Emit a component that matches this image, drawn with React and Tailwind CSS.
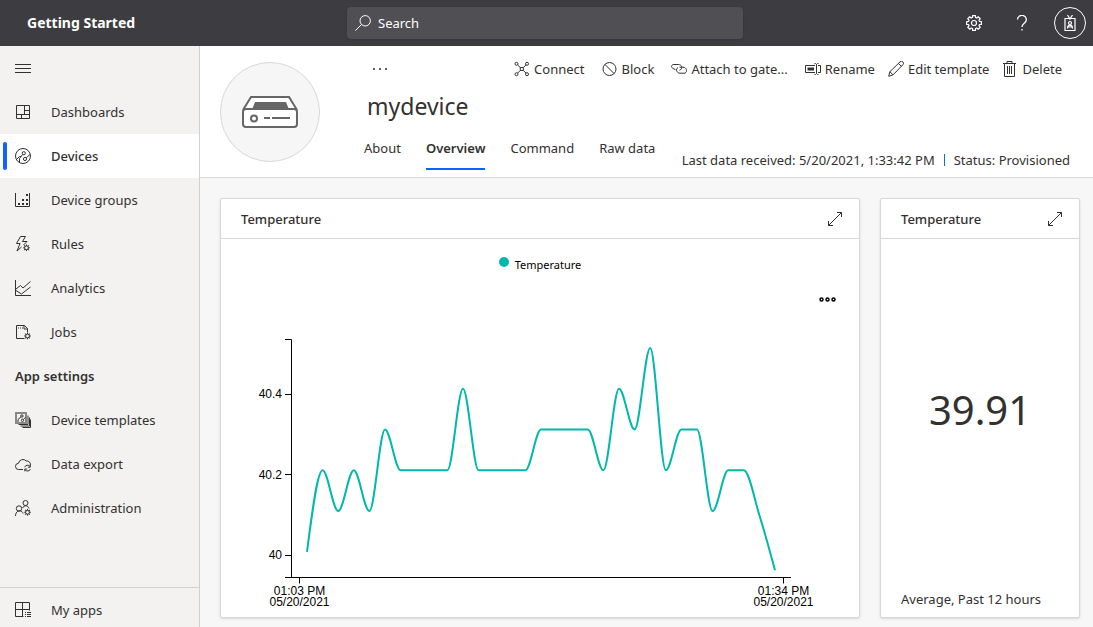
import React from "react";

function Icon({ size = 16, children, className = "", strokeWidth = 1 }) {
  return (
    <svg
      width={size}
      height={size}
      viewBox="0 0 16 16"
      fill="none"
      stroke="currentColor"
      strokeWidth={strokeWidth}
      className={"shrink-0 " + className}
      aria-hidden="true"
    >
      {children}
    </svg>
  );
}

/* Small gear used in the lower right corner of several icons */
function MiniGear({ cx, cy }) {
  const spokes = [0, 45, 90, 135, 180, 225, 270, 315];
  return (
    <g transform={`translate(${cx} ${cy})`}>
      <circle r="1.9" />
      {spokes.map((a) => (
        <path key={a} d="M0 -1.9V-3.3" transform={`rotate(${a})`} />
      ))}
    </g>
  );
}

const icons = {
  menu: <path d="M0 4.5h16M0 8.5h16M0 12.5h16" />,
  dashboards: (
    <path d="M1.5 1.5h13v13h-13zM1.5 10.5h13M9.5 1.5v9M9.5 6.5h5M6.5 10.5v4" />
  ),
  devices: (
    <>
      <circle cx="8" cy="8" r="7.5" />
      <circle cx="8.8" cy="5.2" r="1.6" />
      <circle cx="10" cy="11" r="1.6" />
      <path d="M4.500 14.500V10.500L7.700 6.400M1.500 11.500L4.500 8.500h1.500M11.200 9.900L15 6.500" />
    </>
  ),
  groups: (
    <>
      <path d="M.5 1v13.5h14V1" />
      <path
        d="M3 11h2v2H3zM7 11h2v2H7zM11 11h2v2h-2zM7 7h2v2H7zM11 7h2v2h-2zM11 2h2v2h-2z"
        fill="currentColor"
        stroke="none"
      />
    </>
  ),
  rules: (
    <>
      <path d="M5.500 .5h5L7.500 5.500h4.500L8.500 9M5.500 .5L1.500 7.500h3.500L2 15M2 15l4.500-4" />
      <MiniGear cx={11.5} cy={11.8} />
    </>
  ),
  analytics: (
    <path d="M.5 0v15.500H16M1 9l4.500-3.500L8 8l7.500-6.500M1 10.500l5.500 3.500L15.500 7" />
  ),
  jobs: (
    <>
      <path d="M9.500 14.500h-8v-13h8l3 3V8.500M9 1.500V5h3.500" />
      <path d="M3 4h1M5 4h1M7 4h1" />
      <MiniGear cx={12.5} cy={12} />
    </>
  ),
  templates: (
    <>
      <path d="M1 1h10v10H1z" strokeWidth="2" stroke="#8a8886" />
      <circle cx="6.900" cy="4" r="1.200" />
      <circle cx="7.500" cy="8.300" r="1.200" />
      <path d="M3 10V7.500L6 4.800M8.500 7.300l2-2" />
      <path d="M3.500 12.500h9.500V3.500M5.500 14h9V5.500M7.500 15.500H15.500V7.500" />
    </>
  ),
  exportData: (
    <>
      <path d="M8 13.500H3.700A3 3 0 0 1 3.500 7.300A4.500 4.500 0 0 1 11.300 5A3.500 3.500 0 0 1 15.400 9" />
      <path d="M9.700 11.200a3 3 0 0 1 5.300-.700M15.300 8.800v2.400h-2.400M15.400 13a3 3 0 0 1-5.300.700M9.800 15.300v-2.300H12.200" />
    </>
  ),
  admin: (
    <>
      <circle cx="10.500" cy="3" r="2.500" />
      <circle cx="4" cy="8.500" r="2.700" />
      <path d="M.5 16c0-6.500 7-6.500 7.500-2.500M7.500 8c1.500-3 5.500-3 6.500.500" />
      <MiniGear cx={12.5} cy={12.3} />
    </>
  ),
  apps: (
    <path d="M8.500 14.500h-8v-14h14v8M.5 7.500h14M7.500 .5v14M10 10.500h1M12 10.500h4M10 12.500h1M12 12.500h4M10 14.500h1M12 14.500h4" />
  ),
  connect: (
    <>
      <circle cx="2.500" cy="2.800" r="1.500" />
      <circle cx="13" cy="2.800" r="1.500" />
      <circle cx="2.500" cy="13.200" r="1.500" />
      <circle cx="13" cy="13.200" r="1.500" />
      <path d="M3.700 4L6.300 6.600M11.900 4L9.300 6.600M3.700 12l2.600-2.600M11.900 12L9.300 9.400M6.300 6.500h3v3h-3z" />
    </>
  ),
  block: (
    <>
      <circle cx="7.500" cy="8" r="6.500" />
      <path d="M2.900 3.400l9.200 9.200" />
    </>
  ),
  attach: (
    <>
      <path d="M4.500 8.800L2 7.500C-.500 6 .500 3.500 3 3.500h4.500c3 0 4.500 3.500 2 5.300L8.500 9.200" />
      <path d="M8.500 6.200h3.500c3.500 0 4.800 4.300 2 6H9C5.500 12.200 4.300 7.800 7 6.500" />
    </>
  ),
  rename: (
    <>
      <path d="M10 11.500H.5v-7H10M13 4.500h2.500v7H13" />
      <path d="M2.500 8h6.500" strokeWidth="3" />
      <path d="M9.500 2.500h1l1 1 1-1h1M11.500 3.500v9M9.500 13.500h1l1-1 1 1h1" />
    </>
  ),
  edit: (
    <path d="M.7 15.300l1.200-4.600L12 .9a1.900 1.900 0 0 1 2.900 2.800L5 13.900zM1.900 10.700L5 13.900M10.500 2.500l3 2.900" />
  ),
  trash: (
    <path d="M1 2.500h13M5 2.500v-2h5v2M2.500 2.500v13h10v-13M5.500 5v8M7.500 5v8M9.500 5v8" />
  ),
  search: (
    <>
      <circle cx="10.200" cy="5.800" r="5.200" />
      <path d="M6.500 9.500L.4 15.600" />
    </>
  ),
  expand: <path d="M1.500 14.500l13-13M10 1.500h4.500V6M1.500 10v4.500H6" />,
  badge: (
    <>
      <path d="M3 3.500h10v12H3z" />
      <path d="M5.500 0L8 4l2.500-4M6.500 3.500h3" />
      <circle cx="8" cy="8" r="1.500" />
      <path d="M5.500 13.500c0-4.500 5-4.500 5 0M5.500 12h5" />
    </>
  ),
};

function gearPath() {
  const pts = [];
  for (let i = 0; i < 8; i++) {
    const base = (i * Math.PI) / 4;
    [
      [-0.27, 5.7],
      [-0.19, 7.5],
      [0.19, 7.5],
      [0.27, 5.7],
    ].forEach(([da, r]) => {
      pts.push(
        `${(8 + r * Math.sin(base + da)).toFixed(2)} ${(8 - r * Math.cos(base + da)).toFixed(2)}`
      );
    });
  }
  return "M" + pts.join("L") + "Z";
}

const mainNav = [
  ["Dashboards", "dashboards"],
  ["Devices", "devices"],
  ["Device groups", "groups"],
  ["Rules", "rules"],
  ["Analytics", "analytics"],
  ["Jobs", "jobs"],
];

const settingsNav = [
  ["Device templates", "templates"],
  ["Data export", "exportData"],
  ["Administration", "admin"],
];

function NavItem({ label, icon, active }) {
  return (
    <li>
      <a
        href="#"
        aria-current={active ? "page" : undefined}
        className={
          active
            ? "flex h-11 items-center gap-2 bg-white pl-[3px] font-medium"
            : "flex h-11 items-center gap-5 pl-[15px]"
        }
      >
        {active && <span className="h-7 w-1 rounded-sm bg-[#0f62fe]" />}
        <span className={active ? "flex items-center gap-5" : "contents"}>
          <Icon>{icons[icon]}</Icon>
          <span>{label}</span>
        </span>
      </a>
    </li>
  );
}

function Sidebar() {
  return (
    <nav
      aria-label="Main"
      className="flex w-[200px] shrink-0 flex-col border-r border-[#d2d0ce] bg-[#f3f2f1]"
    >
      <button type="button" aria-label="Toggle menu" className="flex h-11 items-center pl-[15px]">
        <Icon>{icons.menu}</Icon>
      </button>
      <ul>
        {mainNav.map(([label, icon]) => (
          <NavItem key={label} label={label} icon={icon} active={label === "Devices"} />
        ))}
      </ul>
      <h2 className="flex h-11 items-center pl-[15px] font-semibold">App settings</h2>
      <ul>
        {settingsNav.map(([label, icon]) => (
          <NavItem key={label} label={label} icon={icon} />
        ))}
      </ul>
      <a
        href="#"
        className="mt-auto flex items-center gap-5 border-t border-[#d2d0ce] pt-3 pb-[7px] pl-[15px]"
      >
        <Icon>{icons.apps}</Icon>
        <span>My apps</span>
      </a>
    </nav>
  );
}

function TopBar() {
  return (
    <header className="grid h-[46px] shrink-0 grid-cols-[1fr_396px_1fr] items-center bg-[#3d3c40] pr-[3px] text-white">
      <h1 className="pl-[27px] text-[14px] leading-5 font-bold">Getting Started</h1>
      <label className="flex h-8 items-center gap-[7px] rounded-sm bg-[#504f53] px-2 shadow-sm">
        <Icon>{icons.search}</Icon>
        <input
          type="text"
          aria-label="Search"
          placeholder="Search"
          className="min-w-0 flex-1 bg-transparent pb-px text-[13px] outline-none placeholder:text-white"
        />
      </label>
      <div className="flex items-center justify-end pr-1">
        <button type="button" aria-label="Settings" className="flex w-12 justify-center">
          <Icon strokeWidth={1.2}>
            <path d={gearPath()} strokeLinejoin="round" />
            <circle cx="8" cy="8" r="2.500" />
          </Icon>
        </button>
        <button type="button" aria-label="Help" className="flex w-12 justify-center">
          <Icon strokeWidth={1.3}>
            <path d="M3.500 4.500a4.400 4.200 0 1 1 7.500 3C9.500 9 8 9.500 8 12M8 14v1.500" />
          </Icon>
        </button>
        <button
          type="button"
          aria-label="Account"
          className="ml-2 flex h-8 w-8 items-center justify-center rounded-full border border-white"
        >
          <Icon strokeWidth={1.2}>{icons.badge}</Icon>
        </button>
      </div>
    </header>
  );
}

function Command({ icon, children }) {
  return (
    <button type="button" className="flex items-center gap-1 whitespace-nowrap">
      <Icon>{icons[icon]}</Icon>
      <span>{children}</span>
    </button>
  );
}

const tabs = ["About", "Overview", "Command", "Raw data"];

function DeviceHeader() {
  return (
    <section className="flex h-[132px] shrink-0 border-b border-[#d8d8d8] bg-white pt-4 pl-5">
      <div className="flex h-[100px] w-[100px] shrink-0 items-center justify-center rounded-full border border-[#d8d8d8] bg-[#f6f6f6]">
        <svg width="56" height="32" viewBox="0 0 56 32" fill="none" stroke="#666" strokeWidth="2" aria-hidden="true">
          <path d="M1 14L9 1h38l8 13" fill="#fff" />
          <path d="M10 13.500l3-7.500h31l3 7.500z" fill="#666" stroke="none" />
          <rect x="1" y="13" width="54" height="18" rx="3" fill="#fff" />
          <circle cx="12" cy="22.500" r="3" />
          <path d="M22 22h6M30 22h18" />
        </svg>
      </div>
      <div className="ml-11 flex min-w-0 flex-1 flex-col">
        <div className="flex h-[14px] items-center justify-between pr-[31px]">
          <button type="button" aria-label="More" className="ml-2">
            <svg width="16" height="4" viewBox="0 0 16 4" fill="#605e5c" aria-hidden="true">
              <path d="M1 1h2v2H1zM7 1h2v2H7zM13 1h2v2h-2z" />
            </svg>
          </button>
          <div className="flex gap-[17px]">
            <Command icon="connect">Connect</Command>
            <Command icon="block">Block</Command>
            <Command icon="attach">Attach to gate...</Command>
            <div className="flex gap-[13px]">
              <Command icon="rename">Rename</Command>
              <Command icon="edit">Edit template</Command>
              <Command icon="trash">Delete</Command>
            </div>
          </div>
        </div>
        <h2 className="mt-[14px] pl-[3px] text-[23px] leading-8">mydevice</h2>
        <div className="mt-auto flex items-start justify-between pr-[23px] pb-[7px]">
          <div role="tablist" className="flex gap-[25px]">
            {tabs.map((t) => (
              <button
                key={t}
                type="button"
                role="tab"
                aria-selected={t === "Overview"}
                className={
                  t === "Overview"
                    ? "border-b-2 border-[#0f62fe] pb-2 leading-6 font-semibold"
                    : "border-b-2 border-transparent pb-2 leading-6"
                }
              >
                {t}
              </button>
            ))}
          </div>
          <p className="flex gap-[9px] self-end whitespace-nowrap">
            <span>Last data received: 5/20/2021, 1:33:42 PM</span>
            <span className="my-1 w-px bg-[#0078d4]" />
            <span>Status: Provisioned</span>
          </p>
        </div>
      </div>
    </section>
  );
}

function Card({ title, children }) {
  return (
    <article className="flex min-h-0 min-w-0 flex-col rounded-xs border border-[#d8d8d8] bg-white shadow-sm">
      <div className="flex h-10 shrink-0 items-center justify-between border-b border-[#d8d8d8] pr-4 pl-5">
        <h3 className="font-medium">{title}</h3>
        <button type="button" aria-label="Expand">
          <Icon>{icons.expand}</Icon>
        </button>
      </div>
      {children}
    </article>
  );
}

const readings = [
  40.01, 40.21, 40.11, 40.21, 40.11, 40.31, 40.21, 40.21, 40.21, 40.21, 40.41, 40.21, 40.21,
  40.21, 40.21, 40.31, 40.31, 40.31, 40.31, 40.21, 40.41, 40.31, 40.51, 40.21, 40.31, 40.31,
  40.11, 40.21, 40.21, 40.1, 39.965,
];

/* Monotone cubic interpolation through the points */
function monotonePath(pts) {
  const n = pts.length;
  const slope = [];
  for (let i = 0; i < n - 1; i++) {
    slope.push((pts[i + 1][1] - pts[i][1]) / (pts[i + 1][0] - pts[i][0]));
  }
  const m = pts.map((_, i) => {
    if (i === 0 || i === n - 1) return 0;
    const a = slope[i - 1];
    const b = slope[i];
    if (a * b <= 0) return 0;
    return Math.sign(a) * Math.min(Math.abs(a), Math.abs(b), Math.abs(a + b) / 4) * 2;
  });
  m[0] = (3 * slope[0] - m[1]) / 2;
  m[n - 1] = (3 * slope[n - 2] - m[n - 2]) / 2;
  let d = `M${pts[0][0]} ${pts[0][1]}`;
  for (let i = 0; i < n - 1; i++) {
    const h = (pts[i + 1][0] - pts[i][0]) / 3;
    d += `C${pts[i][0] + h} ${pts[i][1] + m[i] * h} ${pts[i + 1][0] - h} ${pts[i + 1][1] - m[i + 1] * h} ${pts[i + 1][0]} ${pts[i + 1][1]}`;
  }
  return d;
}

function TemperatureChart() {
  const pts = readings.map((v, i) => [86 + i * 15.6, 238 - (v - 40) * 408]);
  return (
    <svg viewBox="0 0 638 299" className="block min-h-0 w-full flex-1" role="img" aria-label="Temperature over time">
      <g stroke="#000" fill="none">
        <path d="M64 21.500h6.500v238M64 76.500h6.500M64 156.500h6.500M64 237.500h6.500M64 259.500h506M78.500 259.500v6M562.500 259.500v6" />
      </g>
      <g className="font-['Liberation_Sans',Arial,sans-serif] text-[12px]" fill="#000">
        <g textAnchor="end">
          <text x="61" y="80">40.4</text>
          <text x="61" y="161">40.2</text>
          <text x="61" y="241">40</text>
        </g>
        <g textAnchor="middle">
          <text x="78.500" y="277">01:03 PM</text>
          <text x="78.500" y="288">05/20/2021</text>
          <text x="562.500" y="277">01:34 PM</text>
          <text x="562.500" y="288">05/20/2021</text>
        </g>
      </g>
      <path d={monotonePath(pts)} fill="none" stroke="#01b8aa" strokeWidth="2" />
    </svg>
  );
}

export default function App() {
  return (
    <div className="flex h-screen flex-col overflow-hidden bg-[#f7f7f7] font-['Noto_Sans','Open_Sans',sans-serif] text-[13px] leading-5 text-[#323130]">
      <TopBar />
      <div className="flex min-h-0 flex-1">
        <Sidebar />
        <main className="flex min-w-0 flex-1 flex-col">
          <DeviceHeader />
          <div className="grid min-h-0 flex-1 grid-cols-[minmax(0,1fr)_200px] gap-5 pt-5 pr-[13px] pb-[9px] pl-5">
            <Card title="Temperature">
              <p className="mt-4 flex items-center justify-center gap-[6px] text-[11px] leading-5 text-black">
                <span className="mb-[6px] h-[10px] w-[10px] rounded-full bg-[#01b8aa]" />
                Temperature
              </p>
              <div className="mt-[14px] mb-2 flex justify-end pr-[23px]">
                <button type="button" aria-label="More options" className="py-2">
                  <svg width="17" height="5" viewBox="0 0 17 5" fill="none" stroke="#000" strokeWidth="1.500" aria-hidden="true">
                    <circle cx="2.500" cy="2.500" r="1.500" />
                    <circle cx="8.500" cy="2.500" r="1.500" />
                    <circle cx="14.500" cy="2.500" r="1.500" />
                  </svg>
                </button>
              </div>
              <TemperatureChart />
            </Card>
            <Card title="Temperature">
              <div className="flex flex-1 items-center justify-center pb-2 text-[40px] leading-none">39.91</div>
              <p className="px-5 pb-2">Average, Past 12 hours</p>
            </Card>
          </div>
        </main>
      </div>
    </div>
  );
}
